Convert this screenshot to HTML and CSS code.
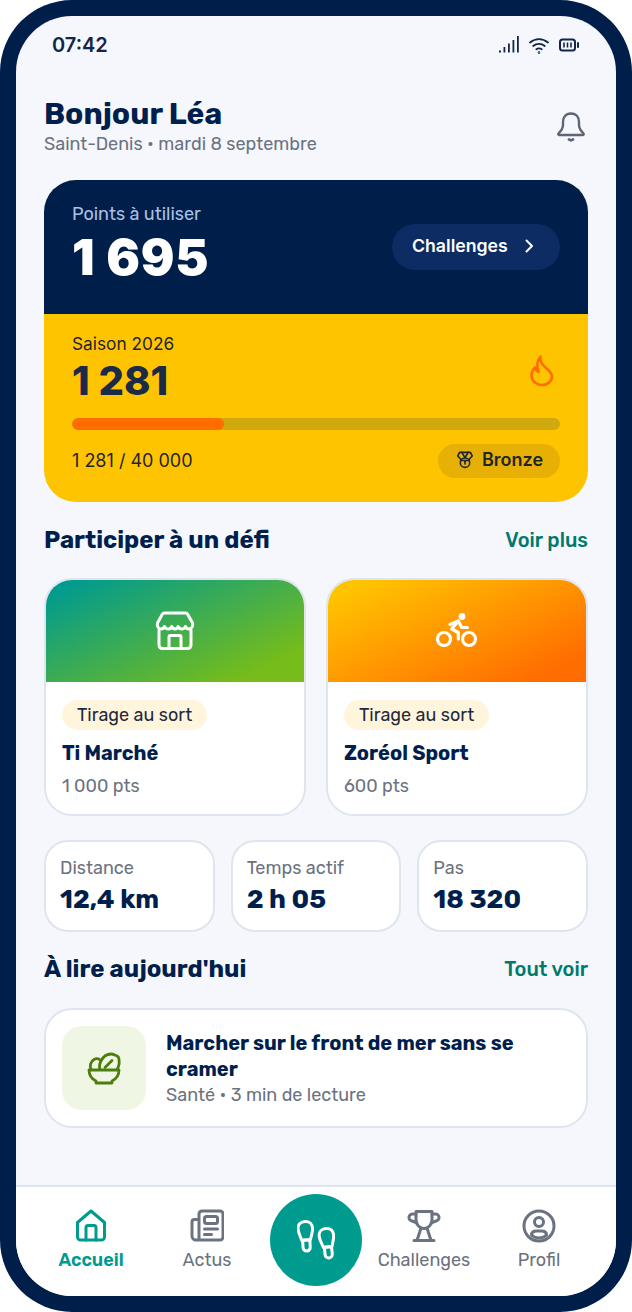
FILE: index.html
```html
<!DOCTYPE html>
<html lang="fr">
<head>
<meta charset="utf-8">
<title>Accueil</title>
<link rel="stylesheet" href="styles.css">
</head>
<body>
<div class="phone">
  <div class="screen">
    <div class="status">
      <span class="time">07:42</span>
      <div class="status-icons">
        <svg width="20" height="18" viewBox="0 0 20 18"><g fill="#12264a"><rect x="0" y="14.500" width="2" height="2"/><rect x="4.500" y="11" width="1.800" height="5.500"/><rect x="9" y="7.500" width="1.800" height="9"/><rect x="13.500" y="4" width="1.800" height="12.500"/><rect x="18" y="0" width="1.800" height="16.500"/></g></svg>
        <svg width="20" height="17" viewBox="0 0 20 17" fill="none" stroke="#12264a" stroke-width="1.800" stroke-linecap="round"><path d="M1 5.500C6.500 1 13.500 1 19 5.500"/><path d="M4.200 9c3.400-2.800 8.200-2.800 11.600 0"/><path d="M7.300 12.300c1.600-1.100 3.800-1.100 5.400 0"/><circle cx="10" cy="15.600" r=".4"/></svg>
        <svg width="20" height="14" viewBox="0 0 20 14" fill="none" stroke="#12264a" stroke-width="2"><rect x="1" y="1.500" width="15" height="11" rx="2.500"/><path d="M5 4.500v5M8.500 4.500v5M12 4.500v5" stroke-width="1.600"/><path d="M19 5v4" stroke-linecap="round"/></svg>
      </div>
    </div>

    <main class="content">
      <header class="greeting">
        <div>
          <h1 class="hello">Bonjour Léa</h1>
          <p class="place">Saint-Denis • mardi 8 septembre</p>
        </div>
        <svg class="bell" width="30" height="32" viewBox="0 0 30 32" fill="none" stroke="#5f6673" stroke-width="2.400" stroke-linecap="round" stroke-linejoin="round"><path d="M15 2.500C9.500 2.500 7 6.500 7 11v3c0 4-2 6-4.500 8.500-.5.600-.1 1.500.7 1.500h23.600c.8 0 1.200-.9.700-1.500C25 20 23 18 23 14v-3c0-4.500-2.500-8.500-8-8.500Z"/><path d="M13 28.500c1.300 1 2.700 1 4 0" stroke-width="2.800"/></svg>
      </header>

      <section class="hero">
        <div class="hero-top">
          <div>
            <p class="hero-label">Points à utiliser</p>
            <p class="hero-points">1 695</p>
          </div>
          <div class="hero-btn">
            <span>Challenges</span>
            <svg width="16" height="16" viewBox="0 0 16 16" fill="none" stroke="#fff" stroke-width="2" stroke-linecap="round" stroke-linejoin="round"><path d="M5.500 2.500 11 8l-5.500 5.500"/></svg>
          </div>
        </div>
        <div class="hero-bottom">
          <div class="season-row">
            <div>
              <p class="season-label">Saison 2026</p>
              <p class="season-points">1 281</p>
            </div>
            <svg class="flame" width="28" height="34" viewBox="0 0 28 34" fill="none" stroke="#ff6d00" stroke-width="2.600" stroke-linecap="round" stroke-linejoin="round"><path d="M12.500 2.500C11.500 7 13 9.500 17 13c3.500 3 7 5.500 7 9.500 0 5-4.500 8.500-10 8.500S3.500 27 3.500 21.500c0-3.500 1.500-6 3.500-8 .5 2 1.500 3.500 3.500 4.500C8.500 12 9 6.500 12.500 2.500Z"/></svg>
          </div>
          <div class="track"><div class="fill" style="width:31.15%"></div></div>
          <div class="season-foot">
            <span class="season-progress">1 281 / 40 000</span>
            <span class="badge">
              <svg width="18" height="18" viewBox="0 0 20 20" fill="none" stroke="#1f2430" stroke-width="1.800" stroke-linejoin="round" stroke-linecap="round"><path d="M4 1.500h12l2 4-4.500 5h-7L2 5.500Z"/><path d="m6.500 1.500 3.500 6 3.500-6"/><circle cx="10" cy="13" r="5.200"/><path d="M10 11.500v3"/></svg>
              Bronze
            </span>
          </div>
        </div>
      </section>

      <div class="section-head head-challenges">
        <h2 class="section-title">Participer à un défi</h2>
        <a class="section-link">Voir plus</a>
      </div>

      <div class="cards">
        <article class="card">
          <div class="card-img img-green">
            <svg width="40" height="40" viewBox="0 0 40 40" fill="none" stroke="#fff" stroke-width="3" stroke-linecap="round" stroke-linejoin="round"><path d="M9.500 2h21c1 0 1.800.5 2.300 1.400L37.500 12c.8 3-.7 6-3.500 6-1.800 0-3-1-3.500-2.500-.6 1.500-2 2.500-3.800 2.500s-3-1-3.500-2.500c-.5 1.500-1.800 2.500-3.200 2.500s-2.700-1-3.200-2.500c-.5 1.500-1.700 2.500-3.500 2.500s-3.200-1-3.800-2.500C9 17 7.800 18 6 18c-2.800 0-4.300-3-3.500-6L7.200 3.400C7.700 2.500 8.500 2 9.500 2Z"/><path d="M4 19v14.500c0 2.500 1.500 4 4 4h24c2.500 0 4-1.500 4-4V19"/><path d="M14 37.500V26c0-1 .7-1.500 1.500-1.500h9c.8 0 1.500.5 1.500 1.500v11.500"/></svg>
          </div>
          <div class="card-body">
            <span class="tag">Tirage au sort</span>
            <h3 class="card-title">Ti Marché</h3>
            <p class="card-pts">1 000 pts</p>
          </div>
        </article>
        <article class="card">
          <div class="card-img img-orange">
            <svg width="42" height="36" viewBox="0 0 42 36" fill="none" stroke="#fff" stroke-width="3.200" stroke-linecap="round" stroke-linejoin="round"><circle cx="8" cy="26" r="6.500"/><circle cx="33" cy="26" r="6.500"/><path d="M14 11.500 22.300 8l3.400 6.500h5.800"/><path d="M22.300 8 15.700 16l6.600 3.500v6.500"/><circle cx="26" cy="3.500" r="3.400" fill="#fff" stroke="none"/></svg>
          </div>
          <div class="card-body">
            <span class="tag">Tirage au sort</span>
            <h3 class="card-title">Zoréol Sport</h3>
            <p class="card-pts">600 pts</p>
          </div>
        </article>
      </div>

      <div class="stats">
        <div class="stat"><p class="stat-label">Distance</p><p class="stat-value">12,4 km</p></div>
        <div class="stat"><p class="stat-label">Temps actif</p><p class="stat-value">2 h 05</p></div>
        <div class="stat"><p class="stat-label">Pas</p><p class="stat-value">18 320</p></div>
      </div>

      <div class="section-head head-read">
        <h2 class="section-title">À lire aujourd'hui</h2>
        <a class="section-link">Tout voir</a>
      </div>

      <article class="article">
        <div class="thumb">
          <svg width="36" height="34" viewBox="0 0 36 34" fill="none" stroke="#4e7d0e" stroke-width="2.800" stroke-linecap="round" stroke-linejoin="round"><path d="M3 19h30c0 5-3 9-7 11v2H10v-2c-4-2-7-6-7-11Z"/><path d="M5 18.500c-1.500-3.500-.5-8 3-10 2.500-1.400 5-.8 6.500 1"/><path d="M14 18.500c-1-2.500-.5-5.500 1-8.500 2-4 5.500-7 10-7 2.500 0 3.500 1 5 1.500 2 .6 3 2 3 4 0 2 .5 3 0 5-.4 1.800-1 3.500-2 5"/><path d="m19 16.500 7-7"/></svg>
        </div>
        <div class="article-text">
          <h3 class="article-title">Marcher sur le front de mer sans se cramer</h3>
          <p class="article-meta">Santé • 3 min de lecture</p>
        </div>
      </article>
    </main>

    <nav class="tabbar">
      <a class="tab tab-active">
        <svg width="32" height="34" viewBox="0 0 32 34" fill="none" stroke="#009b8f" stroke-width="3" stroke-linecap="round" stroke-linejoin="round"><path d="M2.500 13.500 16 2l13.500 11.500V28a3 3 0 0 1-3 3h-21a3 3 0 0 1-3-3Z"/><path d="M11 31V18.500a2 2 0 0 1 2-2h6a2 2 0 0 1 2 2V31"/></svg>
        <span>Accueil</span>
      </a>
      <a class="tab">
        <svg width="34" height="34" viewBox="0 0 34 34" fill="none" stroke="#6b7280" stroke-width="3" stroke-linecap="round" stroke-linejoin="round"><path d="M9 31V5a3 3 0 0 1 3-3h18a3 3 0 0 1 3 3v23a3 3 0 0 1-3 3H6a4 4 0 0 1-4-4V13a2.500 2.500 0 0 1 2.500-2.500H9"/><rect x="14.500" y="7.500" width="13" height="7" rx="2"/><path d="M14.500 20h13M14.500 25.500h7"/></svg>
        <span>Actus</span>
      </a>
      <a class="fab" aria-label="Marche">
        <svg width="38" height="40" viewBox="0 0 38 40" fill="none" stroke="#fff" stroke-width="3" stroke-linecap="round" stroke-linejoin="round"><g transform="rotate(-3 9 17)"><path d="M4.500 20C3 15 1.500 12 1.500 8.500 1.500 4 4.500 1.500 8.800 1.500 13.500 1.500 16 4.500 16 8.500c0 4-1.500 7-2.800 11.500Z"/><path d="M5.500 20h7.200v7.500a3.600 3.600 0 0 1-7.200 0Z"/></g><g transform="translate(1 0) rotate(-6 29 24)"><path d="M25 27c-1.500-5-3-8-3-11.500 0-4.500 3-7 7.300-7 4.700 0 7.200 3 7.200 7 0 4-1.500 7-2.800 11.500Z"/><path d="M26 27h7.200v7.500a3.600 3.600 0 0 1-7.200 0Z"/></g></svg>
      </a>
      <a class="tab">
        <svg width="34" height="34" viewBox="0 0 34 34" fill="none" stroke="#6b7280" stroke-width="3" stroke-linecap="round" stroke-linejoin="round"><path d="M9 2.500h16v8c0 5-3.500 9-8 9s-8-4-8-9Z"/><path d="M9 5H6a3.500 3.500 0 0 0-1 7l4 1.500"/><path d="M25 5h3a3.500 3.500 0 0 1 1 7l-4 1.500"/><path d="M14 19 10 31.500M20 19l4 12.500M7 31.500h20"/></svg>
        <span>Challenges</span>
      </a>
      <a class="tab">
        <svg width="34" height="34" viewBox="0 0 34 34" fill="none" stroke="#6b7280" stroke-width="3" stroke-linecap="round" stroke-linejoin="round"><circle cx="17" cy="17" r="15"/><circle cx="17" cy="13" r="4.500"/><path d="M9.500 26c0-2.500 2-4 5-4h5c3 0 5 1.500 5 4-2 2-4.500 3-7.500 3s-5.500-1-7.500-3Z"/></svg>
        <span>Profil</span>
      </a>
    </nav>
  </div>
</div>
</body>
</html>
```
FILE: styles.css
```css
* { box-sizing: border-box; margin: 0; padding: 0; }
html, body { background: #fff; }
body { width: 632px; height: 1312px; overflow: hidden; font-family: "Rubik", "Roboto", "Inter", sans-serif; color: #001f4d; }
.phone { width: 632px; height: 1312px; padding: 16px; background: #001e4a; border-radius: 72px; }
.screen { width: 600px; height: 1280px; background: #f5f7fc; border-radius: 56px; overflow: hidden; display: flex; flex-direction: column; }

.status { height: 58px; padding: 17px 37px 0 36px; display: flex; justify-content: space-between; align-items: flex-start; flex: none; }
.time { font: 600 20px/24px "Inter", sans-serif; color: #12264a; }
.status-icons { display: flex; align-items: center; gap: 10px; padding-top: 3px; }

.content { flex: 1; padding: 0 28px; min-height: 0; }
.greeting { display: flex; justify-content: space-between; align-items: flex-start; padding-top: 22px; height: 106px; }
.hello { font-size: 30px; line-height: 36px; font-weight: 700; }
.place { font-size: 18px; line-height: 24px; color: #6b7280; }
.bell { margin: 15px 2px 0 0; }

.hero { border-radius: 32px; overflow: hidden; }
.hero-top { height: 134px; background: #001e4a; padding: 22px 28px 0; display: flex; justify-content: space-between; align-items: flex-start; }
.hero-label { font-size: 18px; line-height: 24px; color: #a9c1e4; }
.hero-points { font: 900 50px/52px "Inter", sans-serif; letter-spacing: .8px; color: #fff; margin-top: 5px; }
.hero-btn { margin-top: 22px; width: 168px; height: 46px; border-radius: 23px; background: #0c2c63; color: #fff; display: flex; align-items: center; gap: 13px; padding-left: 20px; padding-bottom: 2px; font: 600 17.700px/24px "Inter", sans-serif; }
.hero-bottom { height: 188px; background: #ffc400; padding: 18px 28px 0; }
.season-row { display: flex; justify-content: space-between; align-items: flex-start; height: 68px; }
.season-label { font: 400 17.300px/24px "Inter", sans-serif; color: #1f2430; }
.season-points { font: 800 40px/44px "Inter", sans-serif; color: #1a2a47; margin-top: 3px; }
.flame { margin: 22px 4px 0 0; }
.track { margin-top: 18px; height: 12px; border-radius: 6px; background: #d1a80e; overflow: hidden; }
.fill { height: 100%; background: #ff6d00; border-radius: 6px; }
.season-foot { margin-top: 14px; display: flex; justify-content: space-between; align-items: center; }
.season-progress { font: 400 18px/22px "Inter", sans-serif; color: #1f2430; }
.badge { width: 122px; height: 34px; border-radius: 17px; background: #e6b104; display: flex; align-items: center; gap: 8px; padding-left: 18px; padding-bottom: 2px; font: 600 18px/24px "Inter", sans-serif; color: #1f2430; }

.section-head { display: flex; justify-content: space-between; align-items: center; height: 32px; }
.head-challenges { margin-top: 22px; }
.head-read { margin-top: 21px; }
.section-title { font-size: 24px; font-weight: 700; line-height: 32px; }
.section-link { font-size: 20px; font-weight: 500; color: #00796b; }

.cards { margin-top: 22px; display: grid; grid-template-columns: 262px 262px; gap: 20px; }
.card { height: 238px; background: #fff; border: 2px solid #dfe5ee; border-radius: 28px; overflow: hidden; }
.card-img { height: 102px; display: flex; align-items: center; justify-content: center; }
.img-green { background: linear-gradient(155deg, #009b8f 6%, #76bc1a 85%); }
.img-orange { background: linear-gradient(155deg, #ffc400 8%, #ff6d00 88%); }
.card-body { padding: 18px 16px 0; }
.tag { display: inline-block; height: 30px; padding: 0 15px; border-radius: 15px; background: #fff5dc; font-size: 18px; line-height: 30px; font-weight: 450; color: #1f2a3d; }
.card-title { margin-top: 9px; font-size: 20px; line-height: 28px; font-weight: 700; }
.card-pts { margin-top: 7px; font-size: 18px; line-height: 24px; color: #6b7280; }

.stats { margin-top: 24px; display: grid; grid-template-columns: repeat(3, 1fr); gap: 16px; }
.stat { height: 92px; background: #fff; border: 2px solid #dfe5ee; border-radius: 24px; padding: 14px 14px 0; }
.stat-label { font-size: 18px; line-height: 24px; color: #6b7280; }
.stat-value { font-size: 26px; line-height: 34px; font-weight: 700; margin-top: 3px; }

.article { margin-top: 23px; height: 120px; background: #fff; border: 2px solid #dfe5ee; border-radius: 28px; display: flex; align-items: center; gap: 20px; padding: 0 16px; }
.thumb { width: 84px; height: 84px; flex: none; border-radius: 20px; background: #eff7e4; display: flex; align-items: center; justify-content: center; }
.article-text { padding-top: 2px; }
.article-title { font-size: 20px; line-height: 26px; font-weight: 700; }
.article-meta { font-size: 18px; line-height: 26px; color: #6b7280; }

.tabbar { flex: none; height: 111px; background: #fff; border-top: 2px solid #dfe5ee; padding: 0 0 0 16px; display: grid; grid-template-columns: 118px 114px 104px 112px 118px; }
.tab { display: flex; flex-direction: column; align-items: center; padding-top: 22px; font-size: 18px; line-height: 24px; color: #6b7280; gap: 5px; }
.tab-active { color: #009b8f; font-weight: 600; }
.fab { justify-self: center; margin-top: 7px; width: 92px; height: 92px; border-radius: 50%; background: #009b8f; display: flex; align-items: center; justify-content: center; }
```
